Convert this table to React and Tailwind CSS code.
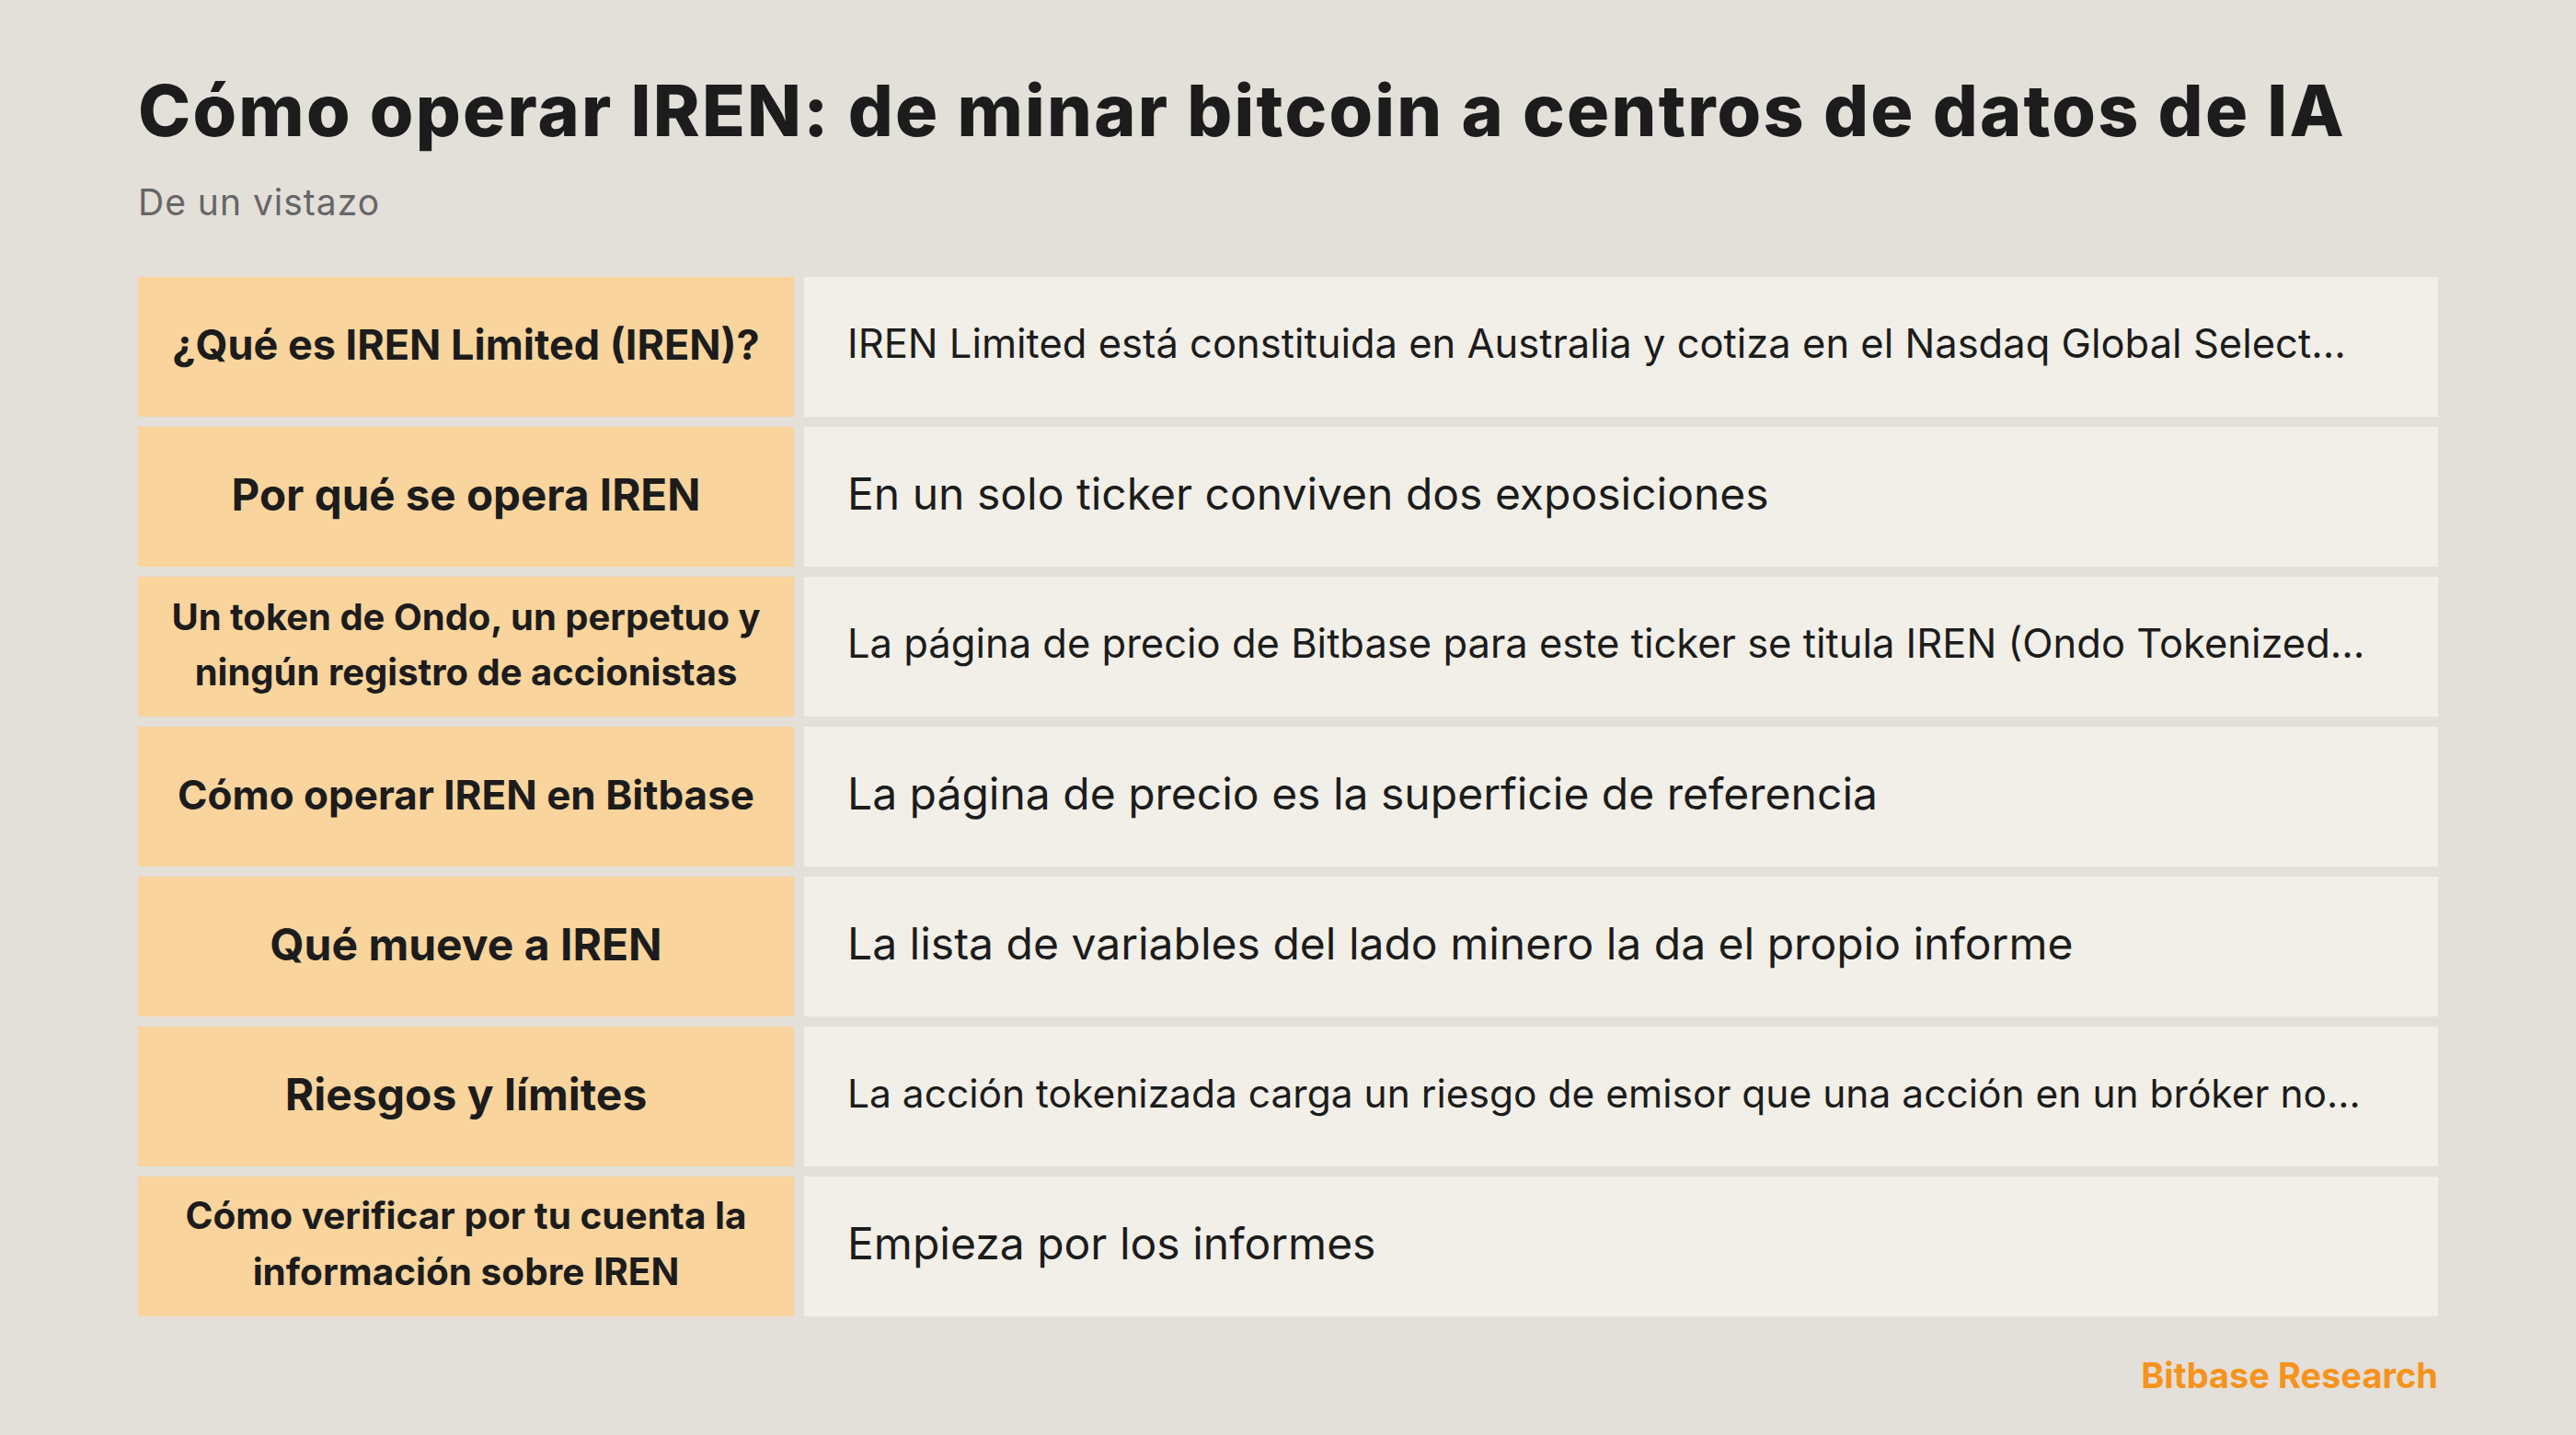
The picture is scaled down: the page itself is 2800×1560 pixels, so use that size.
const rows = [
  {
    label: "¿Qué es IREN Limited (IREN)?",
    labelSize: "text-[45px]",
    value: "IREN Limited está constituida en Australia y cotiza en el Nasdaq Global Select…",
    valueSize: "text-[43.5px]",
  },
  {
    label: "Por qué se opera IREN",
    labelSize: "text-[47.5px]",
    value: "En un solo ticker conviven dos exposiciones",
    valueSize: "text-[48px]",
  },
  {
    label: "Un token de Ondo, un perpetuo y ningún registro de accionistas",
    labelSize: "text-[40px]",
    value: "La página de precio de Bitbase para este ticker se titula IREN (Ondo Tokenized…",
    valueSize: "text-[43.5px]",
  },
  {
    label: "Cómo operar IREN en Bitbase",
    labelSize: "text-[44px]",
    value: "La página de precio es la superficie de referencia",
    valueSize: "text-[48px]",
  },
  {
    label: "Qué mueve a IREN",
    labelSize: "text-[48px]",
    value: "La lista de variables del lado minero la da el propio informe",
    valueSize: "text-[48px]",
  },
  {
    label: "Riesgos y límites",
    labelSize: "text-[48px]",
    value: "La acción tokenizada carga un riesgo de emisor que una acción en un bróker no…",
    valueSize: "text-[42.5px]",
  },
  {
    label: "Cómo verificar por tu cuenta la información sobre IREN",
    labelSize: "text-[40.5px]",
    value: "Empieza por los informes",
    valueSize: "text-[48px]",
  },
];

const App = () => {
  return (
    <div className="w-[2800px] h-[1560px] bg-[#e3dfd9] px-[150px] pt-[82px] font-[family-name:Inter,sans-serif] text-[#1c1c1c]">
      <h1 className="text-[77px] font-extrabold leading-none tracking-[2.2px]">
        Cómo operar IREN: de minar bitcoin a centros de datos de IA
      </h1>
      <p className="mt-[41px] text-[39px] leading-none tracking-[1px] text-[#666666]">De un vistazo</p>

      {/* tabla resumen */}
      <div className="mt-[62px] flex flex-col gap-[11px]">
        {rows.map((row, i) => (
          <div key={i} className="flex h-[152px] gap-[11px]">
            <div className="w-[713px] shrink-0 bg-[#f9d49c] flex items-center justify-center px-[24px] pb-[5px]">
              <span className={`${row.labelSize} font-bold leading-[1.5] text-center`}>{row.label}</span>
            </div>
            <div className="flex-1 bg-[#f2efe8] flex items-center pl-[47px] pr-[40px] pb-[6px]">
              <span className={`${row.valueSize} leading-none whitespace-nowrap`}>{row.value}</span>
            </div>
          </div>
        ))}
      </div>

      <div className="mt-[45px] flex justify-end">
        <span className="text-[38px] font-bold leading-none text-[#f7931a]">Bitbase Research</span>
      </div>
    </div>
  );
};

export default App;
